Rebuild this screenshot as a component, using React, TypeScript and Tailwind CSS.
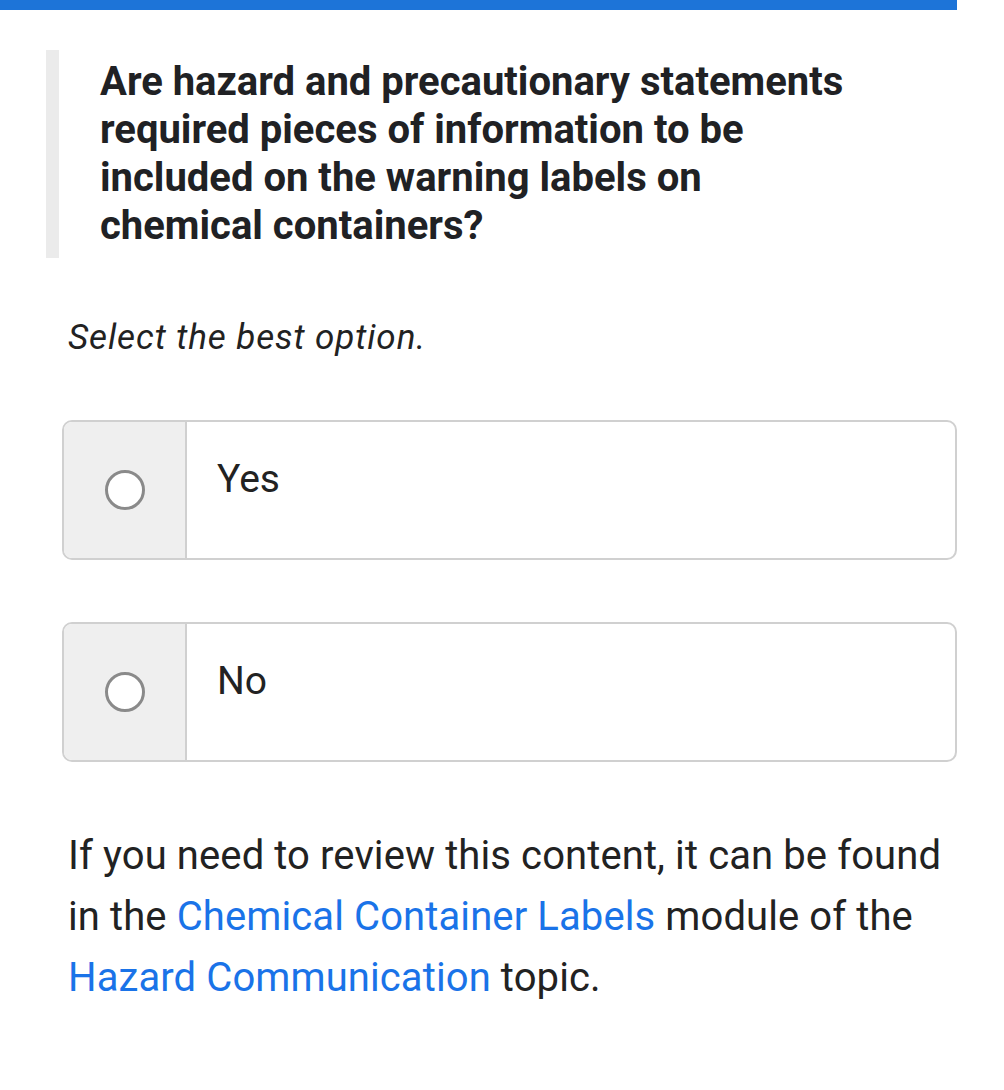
import { useState } from "react";

const options = ["Yes", "No"];

function Option({ label, selected, onSelect }: { label: string; selected: boolean; onSelect: () => void }) {
  return (
    <button
      onClick={onSelect}
      className="flex h-[140px] w-full overflow-hidden rounded-[10px] border-2 border-[#d0d0d0] bg-white text-left"
    >
      <div className="flex w-[123px] shrink-0 items-center justify-center border-r-2 border-[#d0d0d0] bg-[#efefef]">
        <span className="flex h-[40px] w-[40px] items-center justify-center rounded-full border-[3px] border-[#8a8a8a] bg-white">
          {selected && <span className="h-[20px] w-[20px] rounded-full bg-[#1d74d8]" />}
        </span>
      </div>
      <div className="pl-[30px] pt-[35px] text-[39px] leading-[44px] text-[#222]">{label}</div>
    </button>
  );
}

export default function App() {
  const [choice, setChoice] = useState<number | null>(null);

  return (
    <div className="min-h-[1090px] w-[1004px] bg-white font-['Roboto','Liberation_Sans',sans-serif]">
      <div className="w-[957px]">
        <div className="h-[10px] bg-[#1d74d8]" />

        {/* question */}
        <div className="ml-[46px] mt-[40px] flex">
          <div className="w-[13px] shrink-0 bg-[#ebebeb]" />
          <h1 className="pb-[8px] pl-[41px] pr-[87px] pt-[8px] text-[40px] font-bold leading-[48px] text-[#202124]">
            Are hazard and precautionary statements required pieces of information to be included on the warning labels on
            chemical containers?
          </h1>
        </div>

        <p className="ml-[68px] mt-[60px] text-[35px] italic leading-[40px] tracking-[0.9px] text-[#222]">
          Select the best option.
        </p>

        <div className="ml-[62px] mt-[62px] flex flex-col gap-[62px]">
          {options.map((o, i) => (
            <Option key={o} label={o} selected={choice === i} onSelect={() => setChoice(i)} />
          ))}
        </div>

        <p className="ml-[68px] mt-[63px] text-[40px] leading-[61px] tracking-[0.1px] text-[#222]">
          If you need to review this content, it can be found in the{" "}
          <a className="text-[#1a73e8]">Chemical Container Labels</a> module of the{" "}
          <a className="text-[#1a73e8]">Hazard Communication</a> topic.
        </p>
      </div>
    </div>
  );
}
